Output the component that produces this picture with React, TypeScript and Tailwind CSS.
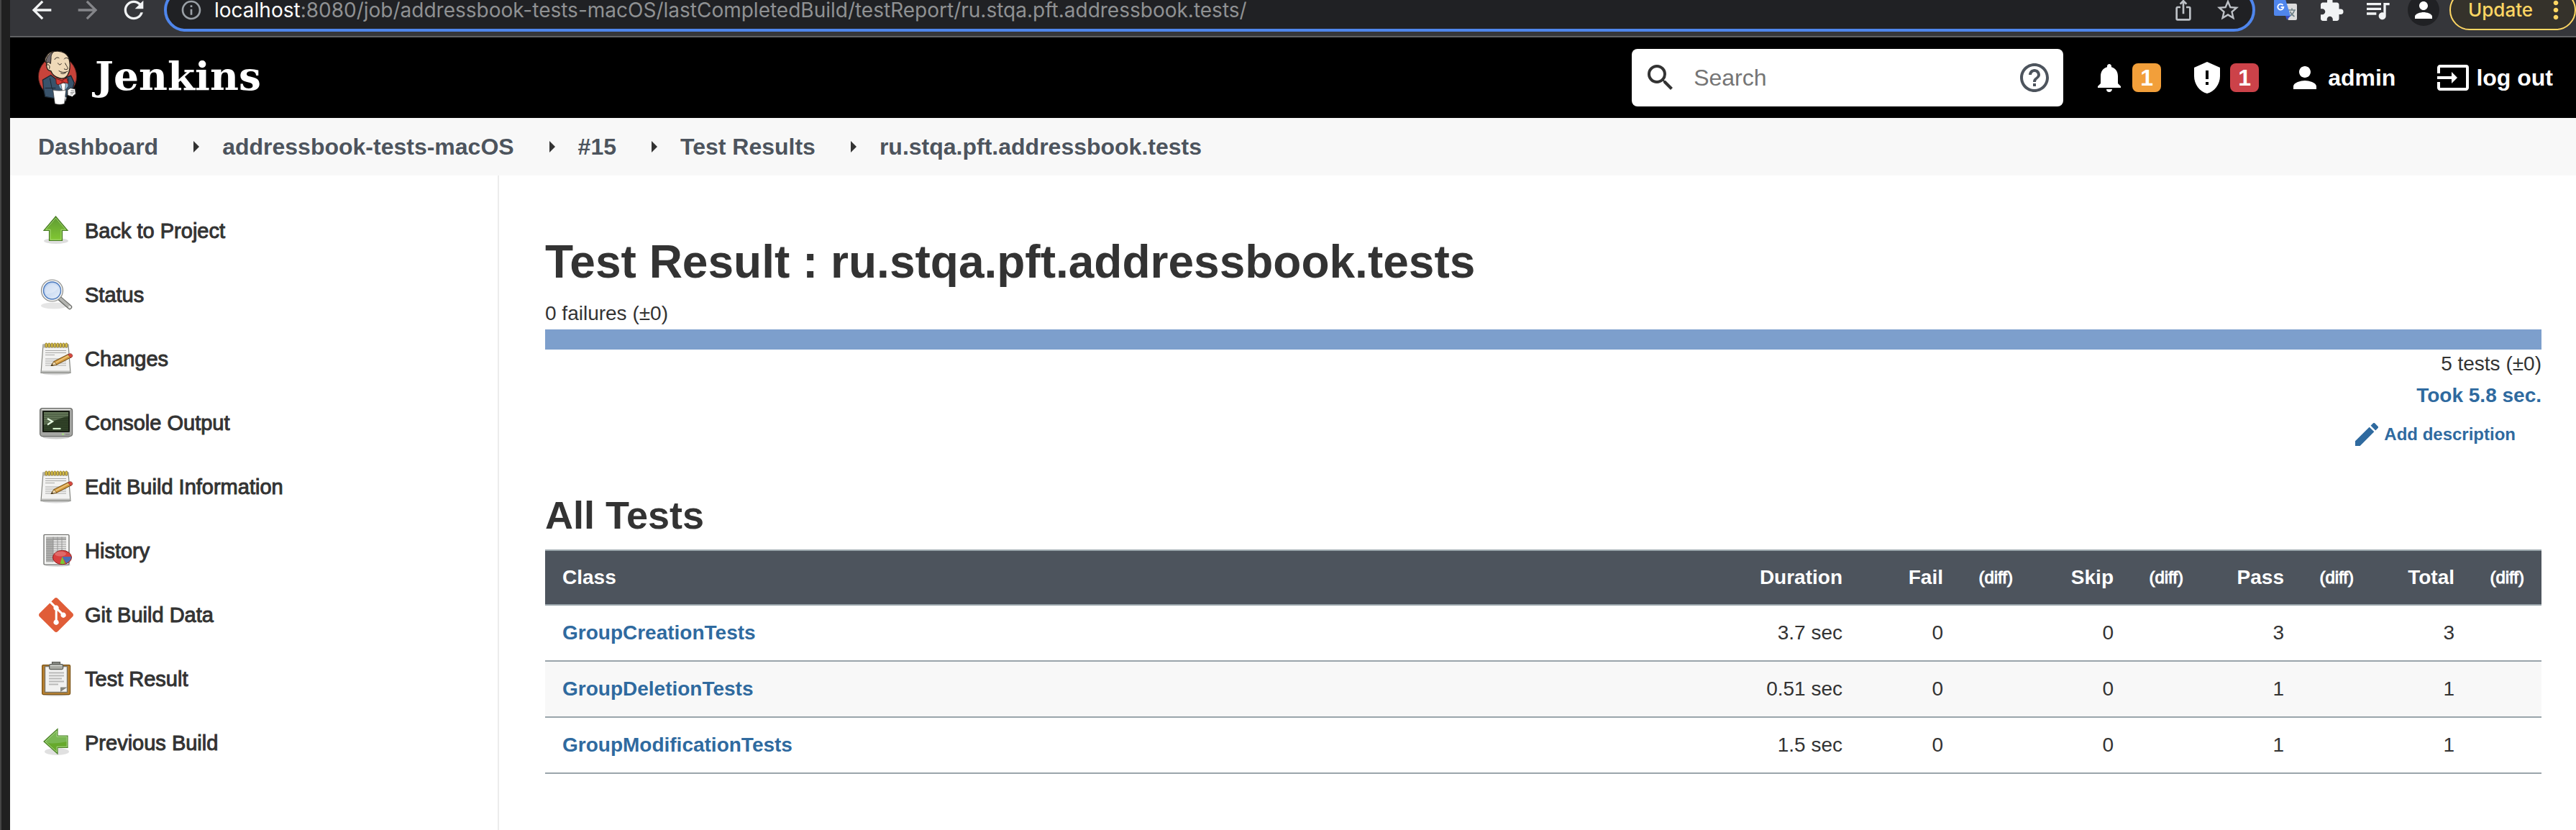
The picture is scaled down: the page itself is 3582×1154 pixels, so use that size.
import type { ReactNode } from "react";
import {
  MdArrowBack,
  MdArrowForward,
  MdEdit,
  MdExtension,
  MdHelpOutline,
  MdInput,
  MdIosShare,
  MdMoreVert,
  MdNotifications,
  MdOutlineInfo,
  MdPerson,
  MdQueueMusic,
  MdRefresh,
  MdSearch,
  MdStarBorder,
} from "react-icons/md";
import { SiGit } from "react-icons/si";

function TranslateIcon() {
  return (
    <svg viewBox="0 0 32 36" className="h-9 w-8" aria-hidden="true">
      <path d="M12 9h18a2 2 0 0 1 2 2v19a2 2 0 0 1-2 2H20z" fill="#dcdcdc" />
      <path d="M20 18h10M25 15.500v2.500M28.500 18c-1 4-4 7-7 8.500M22.500 20c1 3 3 5 6 7" stroke="#6f8187" strokeWidth="1.600" fill="none" />
      <path d="M16 26h7l-5 6z" fill="#3a4fc4" />
      <path d="M2 3h14l7 23H2a2 2 0 0 1-2-2V5a2 2 0 0 1 2-2z" fill="#5086ec" />
      <path d="M12.500 11.200A4 4 0 1 0 13.300 14H9.600" stroke="#fff" strokeWidth="1.900" fill="none" />
    </svg>
  );
}

function BrowserButton({ label, children }: { label: string; children: ReactNode }) {
  return (
    <button type="button" aria-label={label} className="flex w-16 shrink-0 items-center justify-center text-[#f1f3f4]">
      {children}
    </button>
  );
}

function BrowserBar() {
  return (
    <div className="h-[52px] overflow-hidden border-b-2 border-[#606163] bg-[#35363a]">
      <div className="-mt-[22px] flex h-[72px] items-center pl-3 font-[Inter,sans-serif] text-[28px] leading-7">
        <BrowserButton label="Back"><MdArrowBack className="size-10" /></BrowserButton>
        <BrowserButton label="Forward"><MdArrowForward className="size-10 text-[#85868a]" /></BrowserButton>
        <BrowserButton label="Reload"><MdRefresh className="size-10" /></BrowserButton>
        <div className="mx-[10px] flex h-[60px] min-w-0 flex-1 items-center rounded-full border-4 border-[#4f86ec] bg-[#202124] pl-[18px] pr-4 text-[#bdc1c6]">
          <MdOutlineInfo className="size-8 shrink-0 text-[#9aa0a6]" />
          <div role="textbox" aria-label="Address" className="ml-4 min-w-0 flex-1 whitespace-nowrap text-[#8f9193]">
            <span className="text-white">localhost</span>
            :8080/job/addressbook-tests-macOS/lastCompletedBuild/testReport/ru.stqa.pft.addressbook.tests/
          </div>
          <button type="button" aria-label="Share" className="mr-7"><MdIosShare className="size-8" /></button>
          <button type="button" aria-label="Bookmark"><MdStarBorder className="size-9" /></button>
        </div>
        <BrowserButton label="Translate"><TranslateIcon /></BrowserButton>
        <BrowserButton label="Extensions"><MdExtension className="size-9" /></BrowserButton>
        <BrowserButton label="Media"><MdQueueMusic className="size-10" /></BrowserButton>
        <BrowserButton label="Profile">
          <span className="flex size-11 items-center justify-center rounded-full bg-[#202124] text-white">
            <MdPerson className="size-9" />
          </span>
        </BrowserButton>
        <button type="button" className="ml-1 flex h-14 w-44 shrink-0 items-center justify-between rounded-full border-2 border-[#fdd663] bg-[#35322b] pl-6 pr-[6px] text-[26px] font-medium text-[#fdd663]">
          Update
          <MdMoreVert className="size-10" />
        </button>
      </div>
    </div>
  );
}

function Butler() {
  return (
    <svg viewBox="60 205 180 235" className="h-[78px] w-[60px]" aria-hidden="true">
      <ellipse cx="150" cy="318" rx="80" ry="84" fill="#c8433a" stroke="#4a1c18" strokeWidth="3" />
      <path d="M88 332l34-20 26 20 20 40 18-50 20-8 14 30-8 30-20 14-8 28-40-6-46-8-6-30z" fill="#39536b" stroke="#1b2630" strokeWidth="4" />
      <path d="M118 325l8 40 12 20M196 325l-4 34-14 28M98 366h44" stroke="#1b2630" strokeWidth="3" fill="none" />
      <path d="M150 338l22 10 20-10 2 20-16 24-18-18z" fill="#8db3cf" />
      <path d="M164 348l10-4 10 4-4 40h-8z" fill="#fff" stroke="#333" strokeWidth="2" />
      <path d="M104 262c-8-6-8-22 0-30 6-12 20-20 36-20 30-4 56 10 60 40 4 18 2 44-8 60-8 12-22 16-36 12-16-4-28-14-34-30-14 0-20-14-18-32z" fill="#efd9b8" stroke="#241d18" strokeWidth="4" />
      <path d="M103 262c-4-18 6-38 30-48-10 12-10 18-10 26l-2 24-8-6z" fill="#6c6669" stroke="#241d18" strokeWidth="3" />
      <path d="M102 270c10-6 18 0 14 14M138 246c4-8 12-10 18-6M178 244c4-6 14-6 18 0M152 262c4 8 10 8 14 2M182 262c4 10 14 20 10 24-4 4-10 2-14 0M156 294c12 8 26 8 36 2M164 304c8 4 14 2 20-2" stroke="#241d18" strokeWidth="3" fill="none" strokeLinecap="round" />
      <path d="M143 326l24 8 22-10 6 22-20-4-22 10-8-4z" fill="#d33833" stroke="#6b1714" strokeWidth="3" />
      <path d="M166 334h10v10h-10z" fill="#a82722" />
      <path d="M192 374l12-8 20 4 2 20-14 12-20-6z" fill="#fff" stroke="#333" strokeWidth="3" />
      <path d="M206 376l14 2M204 384h16M204 391l12-1" stroke="#333" strokeWidth="2" />
      <path d="M131 374c18 4 36 4 54 0l-6 58c-14 4-26 4-40 0z" fill="#fff" stroke="#333" strokeWidth="2" />
      <path d="M181 402l6 4-4 16" fill="#fff" stroke="#888" strokeWidth="2" />
    </svg>
  );
}

function ShieldIcon() {
  return (
    <svg viewBox="0 0 24 24" className="size-12" fill="currentColor" aria-hidden="true">
      <path d="M12 1L3 5v6c0 5.550 3.840 10.740 9 12 5.160-1.260 9-6.450 9-12V5l-9-4zm1 12h-2V7h2v6zm0 4h-2v-2h2v2z" />
    </svg>
  );
}

function Badge({ tone, children }: { tone: string; children: ReactNode }) {
  return (
    <span className={`flex size-10 items-center justify-center rounded-lg ${tone}`}>{children}</span>
  );
}

function Header() {
  return (
    <header className="flex h-28 items-center bg-black pl-9 pr-8 text-[32px] font-bold leading-10 text-white">
      <a href="#home" className="flex items-center gap-[22px]">
        <Butler />
        <span className="pb-1 font-['DejaVu_Serif',serif] text-[55px] leading-[64px]">Jenkins</span>
      </a>
      <form className="ml-auto flex h-20 w-[600px] items-center rounded-lg bg-white px-4 font-normal" role="search">
        <label htmlFor="search" aria-label="Search" className="text-[#333333]">
          <MdSearch className="size-12" />
        </label>
        <input id="search" type="text" placeholder="Search" className="ml-[22px] min-w-0 flex-1 text-[#333333] outline-none placeholder:text-[#757575]" />
        <a href="#help" aria-label="Help" className="text-[#4d545d]"><MdHelpOutline className="size-12" /></a>
      </form>
      <button type="button" aria-label="Notifications" className="ml-10 flex items-center gap-2">
        <MdNotifications className="size-12" />
        <Badge tone="bg-[#f29f3a]">1</Badge>
      </button>
      <button type="button" aria-label="Security warnings" className="ml-10 flex items-center gap-2">
        <ShieldIcon />
        <Badge tone="bg-[#cc4249]">1</Badge>
      </button>
      <a href="#admin" className="ml-10 flex items-center gap-2">
        <MdPerson className="size-12" />
        admin
      </a>
      <a href="#logout" className="ml-14 flex items-center gap-2">
        <MdInput className="size-12" />
        log out
      </a>
    </header>
  );
}

const crumbs = ["Dashboard", "addressbook-tests-macOS", "#15", "Test Results", "ru.stqa.pft.addressbook.tests"];

function Breadcrumbs() {
  return (
    <nav aria-label="Breadcrumb" className="bg-[#f8f8f8]">
      <ol className="flex h-20 items-center pl-[39px] text-[32px] font-bold leading-10 text-[#4d545d]">
        {crumbs.map((crumb, i) => (
          <li key={crumb} className="flex items-center">
            {i > 0 && (
              <svg viewBox="0 0 8 16" className="ml-[49px] mr-8 h-4 w-2" aria-hidden="true">
                <path d="M0 0l8 8-8 8z" fill="#333" />
              </svg>
            )}
            <a href="#crumb">{crumb}</a>
          </li>
        ))}
      </ol>
    </nav>
  );
}

function UpArrowIcon() {
  return (
    <svg viewBox="0 0 48 48" className="size-12" aria-hidden="true">
      <defs>
        <linearGradient id="up" x1="0" y1="0" x2="0" y2="1">
          <stop offset="0" stopColor="#5e9a34" />
          <stop offset="1" stopColor="#82c832" />
        </linearGradient>
      </defs>
      <ellipse cx="24" cy="38" rx="17" ry="4" fill="#000" opacity=".13" />
      <path d="M23.500 4L40 23.500h-7.500v14h-18v-14H7z" fill="url(#up)" stroke="#477b22" strokeWidth="1.200" />
      <path d="M23.500 6L37.500 22.200H31v14H16v-14H9.500z" fill="none" stroke="#b0dd86" strokeWidth="1" opacity=".8" />
    </svg>
  );
}

function LeftArrowIcon() {
  return (
    <svg viewBox="0 0 48 48" className="size-12" aria-hidden="true">
      <ellipse cx="25" cy="36" rx="17" ry="5" fill="#000" opacity=".12" />
      <path d="M7 22L26 4.500V14h14v16.500H26V39z" fill="#79b752" stroke="#4b8027" strokeWidth="1.200" />
      <path d="M9 23c9 3 20 1 30-1v7.500H25V37z" fill="#66a92c" />
      <path d="M9 22L25 7.200v8h14v14H25v7.200z" fill="none" stroke="#b5dd94" strokeWidth="1" opacity=".8" />
    </svg>
  );
}

function MagnifierIcon() {
  return (
    <svg viewBox="0 0 48 48" className="size-12" aria-hidden="true">
      <defs>
        <linearGradient id="lens" x1="0" y1="0" x2="1" y2="1">
          <stop offset="0" stopColor="#b4cbec" />
          <stop offset="1" stopColor="#e6effa" />
        </linearGradient>
      </defs>
      <ellipse cx="21" cy="39" rx="18" ry="4.500" fill="#000" opacity=".1" />
      <path d="M29 29l14 12" stroke="#6c6d69" strokeWidth="6.500" strokeLinecap="round" />
      <path d="M30 29.500l12.500 11" stroke="#b4b5b1" strokeWidth="4" strokeLinecap="round" />
      <circle cx="43" cy="41" r="2" fill="#e4e4e2" />
      <circle cx="18.500" cy="18" r="15" fill="#f3f3f2" stroke="#8b8c89" strokeWidth="1.200" />
      <circle cx="18.500" cy="18" r="12" fill="url(#lens)" stroke="#4a79bd" strokeWidth="1.400" />
      <path d="M9 18a9.500 9.500 0 0 1 18-4c-4 6-10 8-17 9z" fill="#fff" opacity=".3" />
    </svg>
  );
}

function NotepadIcon() {
  return (
    <svg viewBox="0 0 48 48" className="size-12" aria-hidden="true">
      <ellipse cx="24" cy="44" rx="19" ry="2.500" fill="#000" opacity=".15" />
      <path d="M6 4h35l3 39.500H3z" fill="#f2f2f1" stroke="#83847f" strokeWidth="1.200" />
      <path d="M6 4h35l.4 4.500H5.600z" fill="#b6b5ac" />
      <path d="M4 40.500h39v2.500H4z" fill="#b9bab7" />
      {[9, 13, 17, 21, 25, 29, 33, 37].map((x) => (
        <rect key={x} x={x} y="2" width="2.600" height="6" rx="1.200" fill="#e7ce4f" stroke="#7d6510" strokeWidth=".8" />
      ))}
      <path d="M9 12.500h29M9 15.500h29M9 18.500h13M9 24h29M9 27h29M9 30h29M9 33h29" stroke="#a9a9a7" strokeWidth="1" />
      <path d="M17 33.500l4-6L41 17.500l4.500 4L25 32z" fill="#d39a3f" stroke="#6e4a12" strokeWidth="1" />
      <path d="M23 29.500L42.500 19" stroke="#efc67b" strokeWidth="1.500" />
      <path d="M17 33.500l4-6 4 4.500z" fill="#eed9b0" stroke="#6e4a12" strokeWidth=".8" />
      <path d="M17 33.500l1.500-2.300 1.600 1.700z" fill="#222" />
      <path d="M41 17.500c3-2 7 0 5.500 3.500l-2 1.500-4-4.500z" fill="#d94a41" stroke="#8b3a32" strokeWidth=".8" />
    </svg>
  );
}

function ConsoleIcon() {
  return (
    <svg viewBox="0 0 48 48" className="size-12" aria-hidden="true">
      <ellipse cx="24" cy="43.500" rx="19" ry="3" fill="#000" opacity=".2" />
      <rect x="1.600" y="3.600" width="45" height="39" rx="3.500" fill="#a5a6a3" stroke="#6b6c69" strokeWidth="1.200" />
      <path d="M4 5.500h40" stroke="#dededc" strokeWidth="1.500" />
      <rect x="5" y="7" width="38" height="30" rx="1" fill="#161b12" />
      <rect x="7" y="9" width="34" height="26" fill="#33442a" />
      <path d="M7 9h34v6c-10 1-20 7-34 12z" fill="#66795a" />
      <path d="M7 12h34M7 15h34M7 18h34M7 21h34M7 24h34M7 27h34M7 30h34M7 33h34" stroke="#1d2a15" strokeWidth=".8" opacity=".6" />
      <path d="M12 18l7 4-7 4.500" stroke="#e8fbe2" strokeWidth="2.200" fill="none" />
      <path d="M19.500 32h11" stroke="#d5f2cc" strokeWidth="2.200" />
      <rect x="32" y="38.600" width="3" height="2" fill="#a6e07c" />
      <path d="M37 40h6" stroke="#777875" strokeWidth="1" />
    </svg>
  );
}

function HistoryIcon() {
  return (
    <svg viewBox="0 0 48 48" className="size-12" aria-hidden="true">
      <ellipse cx="26" cy="43.500" rx="18" ry="2.500" fill="#000" opacity=".15" />
      <rect x="7" y="1.500" width="35" height="41.500" rx="1" fill="#f5f5f4" stroke="#5f605d" strokeWidth="1.200" />
      <rect x="10" y="4.500" width="28" height="35" fill="#e6e6e5" />
      <path d="M10 4.500h28v4H10zM10 8.500h10v31H10z" fill="#b0b0ae" />
      <path d="M10 8.500h28M10 11.600h28M10 14.700h28M10 17.800h28M10 20.900h28M10 24h28M10 27.100h28M10 30.200h28M10 33.300h28M10 36.400h28M20 4.500v35M26 4.500v35M32 4.500v35" stroke="#8c8c8a" strokeWidth=".8" />
      <ellipse cx="32.500" cy="33" rx="13" ry="9.700" fill="#d8403f" stroke="#8c1d1d" strokeWidth="1" />
      <path d="M32.500 32H45c0 4-3 7.500-7 9z" fill="#4a6fb5" />
      <path d="M32.500 32l4 9.800c-2 .6-5 .6-7 0z" fill="#7bc832" />
      <ellipse cx="30" cy="28" rx="8" ry="3.500" fill="#fff" opacity=".22" />
    </svg>
  );
}

function ClipboardIcon() {
  return (
    <svg viewBox="0 0 48 48" className="size-12" aria-hidden="true">
      <ellipse cx="24" cy="46" rx="18" ry="2" fill="#000" opacity=".15" />
      <rect x="4.600" y="4.600" width="39" height="41" rx="1.500" fill="#b9812f" stroke="#7a5214" strokeWidth="1.200" />
      <path d="M8.500 6.500h31v36h-31z" fill="#f1f1f0" stroke="#7b7464" strokeWidth="1.400" />
      <path d="M14 15.500h21M14 19.500h21M14 23.500h18M14 27.500h21M14 31.500h13" stroke="#b9b9b8" strokeWidth="1.800" />
      <path d="M30 42v-6.500h9.500z" fill="#85867f" />
      <path d="M18.500 4V.7h11V4" fill="#8f918b" stroke="#5d5f59" strokeWidth="1.200" />
      <rect x="14.600" y="3.600" width="19" height="7" rx="1.500" fill="#a9aba4" stroke="#5d5f59" strokeWidth="1.200" />
      <path d="M16 5.500h16" stroke="#d6d7d2" strokeWidth="1.200" />
    </svg>
  );
}

const tasks: { label: string; icon: ReactNode }[] = [
  { label: "Back to Project", icon: <UpArrowIcon /> },
  { label: "Status", icon: <MagnifierIcon /> },
  { label: "Changes", icon: <NotepadIcon /> },
  { label: "Console Output", icon: <ConsoleIcon /> },
  { label: "Edit Build Information", icon: <NotepadIcon /> },
  { label: "History", icon: <HistoryIcon /> },
  { label: "Git Build Data", icon: <SiGit className="size-12 text-[#e05d38]" /> },
  { label: "Test Result", icon: <ClipboardIcon /> },
  { label: "Previous Build", icon: <LeftArrowIcon /> },
];

function SidePanel() {
  return (
    <nav aria-label="Tasks" className="w-[680px] shrink-0 border-r-2 border-[#ececec] pl-10 pt-8">
      <ul>
        {tasks.map((task) => (
          <li key={task.label}>
            <a href="#task" className="flex h-[89px] items-center gap-4 text-[29px] leading-9 [-webkit-text-stroke:1px_#333333]">
              {task.icon}
              {task.label}
            </a>
          </li>
        ))}
      </ul>
    </nav>
  );
}

const groups = ["Fail", "Skip", "Pass", "Total"];
const rows = [
  { name: "GroupCreationTests", duration: "3.7 sec", counts: [0, 0, 3, 3] },
  { name: "GroupDeletionTests", duration: "0.51 sec", counts: [0, 0, 1, 1] },
  { name: "GroupModificationTests", duration: "1.5 sec", counts: [0, 0, 1, 1] },
];

function ResultsTable() {
  return (
    <table className="mt-4 w-full table-fixed border-collapse text-right">
      <colgroup>
        <col />
        <col className="w-[200px]" />
        {groups.map((g) => [<col key={g} className="w-[140px]" />, <col key={g + "diff"} className="w-[97px]" />])}
      </colgroup>
      <thead>
        <tr className="h-[76px] border-y-2 border-[#9aa5ab] bg-[#4d545d] text-white">
          <th scope="col" className="px-6 text-left">Class</th>
          <th scope="col" className="px-6">Duration</th>
          {groups.map((g) => [
            <th key={g} scope="col" className="px-6">{g}</th>,
            <th key={g + "diff"} scope="col" className="whitespace-nowrap px-6 text-2xl font-normal [-webkit-text-stroke:1px_white]">(diff)</th>,
          ])}
        </tr>
      </thead>
      <tbody>
        {rows.map((row) => (
          <tr key={row.name} className="h-[78px] border-b-2 border-[#9aa5ab] even:bg-[#f8f8f8]">
            <td className="px-6 text-left">
              <a href="#class" className="font-bold text-[#2f6a9f]">{row.name}</a>
            </td>
            <td className="px-6">{row.duration}</td>
            {row.counts.map((count, i) => [
              <td key={groups[i]} className="px-6">{count}</td>,
              <td key={groups[i] + "diff"} />,
            ])}
          </tr>
        ))}
      </tbody>
    </table>
  );
}

function MainPanel() {
  return (
    <main className="min-w-0 flex-1 pl-16 pr-12 pt-20">
      <h1 className="text-[64px] font-bold leading-[80px]">Test Result : ru.stqa.pft.addressbook.tests</h1>
      <p className="mt-4">0 failures (±0)</p>
      <div className="mt-[6px] h-7 bg-[#7d9fcc]" />
      <div className="mt-1 flex flex-col items-end">
        <p>5 tests (±0)</p>
        <a href="#history" className="mt-3 font-bold text-[#2f6a9f]">Took 5.8 sec.</a>
        <a href="#description" className="mr-9 mt-[22px] flex items-center gap-2 text-2xl font-bold leading-8 text-[#2f6a9f]">
          <MdEdit viewBox="3 3 18 18" className="size-8" />
          Add description
        </a>
      </div>
      <h2 className="mt-16 text-[54px] font-bold leading-[64px]">All Tests</h2>
      <ResultsTable />
    </main>
  );
}

export default function App() {
  return (
    <div className="flex min-h-screen bg-white font-['Liberation_Sans',Arial,sans-serif] text-[28px] leading-8 text-[#333333]">
      <div className="w-[14px] shrink-0 border-l-2 border-[#454545] bg-[#202020]" />
      <div className="flex min-w-0 flex-1 flex-col">
        <BrowserBar />
        <Header />
        <Breadcrumbs />
        <div className="flex flex-1">
          <SidePanel />
          <MainPanel />
        </div>
      </div>
    </div>
  );
}
